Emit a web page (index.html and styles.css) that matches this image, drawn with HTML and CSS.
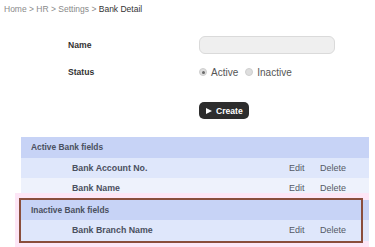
FILE: index.html
```html
<!DOCTYPE html>
<html>
<head>
<meta charset="utf-8">
<link rel="stylesheet" href="styles.css">
</head>
<body>
<div class="crumbs">Home &gt; HR &gt; Settings &gt; <span class="cur">Bank Detail</span></div>
<div class="form">
  <div class="lbl name-lbl">Name</div>
  <div class="input"></div>
  <div class="lbl status-lbl">Status</div>
  <div class="radios">
    <span class="radio on"></span><span class="rtxt">Active</span>
    <span class="radio"></span><span class="rtxt">Inactive</span>
  </div>
  <div class="spacer"></div>
  <div class="btn-cell"><button class="create"><span class="tri"></span>Create</button></div>
</div>
<div class="fields">
  <div class="hdr">Active Bank fields</div>
  <div class="frow r1"><span class="fname">Bank Account No.</span><span class="edit">Edit</span><span class="del">Delete</span></div>
  <div class="frow r2"><span class="fname">Bank Name</span><span class="edit">Edit</span><span class="del">Delete</span></div>
</div>
<div class="inactive">
  <div class="hdr">Inactive Bank fields</div>
  <div class="frow r3"><span class="fname">Bank Branch Name</span><span class="edit">Edit</span><span class="del">Delete</span></div>
  <div class="mark"></div>
</div>
</body>
</html>
```

FILE: styles.css
```css
html, body {
  margin: 0;
  padding: 0;
  background: #ffffff;
  font-family: "Liberation Sans", Arial, sans-serif;
  width: 375px;
  height: 247px;
  overflow: hidden;
}
.crumbs {
  padding: 4px 4px;
  font-size: 8.5px;
  line-height: 10px;
  color: #8a8a8a;
}
.crumbs .cur {
  color: #333;
}
.form {
  margin: 18px 0 0 68px;
  display: grid;
  grid-template-columns: 131px auto;
  grid-template-rows: 18px 14px auto;
  row-gap: 11px;
  align-items: center;
}
.form .lbl {
  font-size: 8.6px;
  font-weight: bold;
  color: #333;
}
.input {
  width: 134px;
  height: 16px;
  background: #efefef;
  border: 1px solid #dadada;
  border-radius: 6px;
}
.radios {
  display: flex;
  align-items: center;
  font-size: 10px;
  color: #555;
}
.radio {
  width: 8px;
  height: 8px;
  border-radius: 50%;
  background: #dedede;
  border: 1px solid #cfcfcf;
  margin: 0 4px 0 0;
  box-sizing: border-box;
  display: inline-flex;
  align-items: center;
  justify-content: center;
}
.radio.on::after {
  content: "";
  width: 3px;
  height: 3px;
  border-radius: 50%;
  background: #6a6a6a;
}
.radios .rtxt {
  margin-right: 7px;
}
.btn-cell {
  margin-top: 12px;
}
.create {
  display: flex;
  align-items: center;
  width: 50px;
  height: 17px;
  padding: 0 0 0 7px;
  border: none;
  border-radius: 5px;
  background: #2d2d2d;
  color: #fff;
  font-family: "Liberation Sans", Arial, sans-serif;
  font-size: 8.6px;
  font-weight: bold;
}
.tri {
  width: 0;
  height: 0;
  border-left: 6px solid #fff;
  border-top: 3.5px solid transparent;
  border-bottom: 3.5px solid transparent;
  margin-right: 4px;
}
.fields {
  margin: 18px 6px 0 21px;
}
.hdr {
  height: 21px;
  line-height: 21px;
  padding-left: 10px;
  background: #c7d3f6;
  font-size: 8.4px;
  font-weight: bold;
  color: #4a5060;
}
.frow {
  display: flex;
  height: 20px;
  line-height: 20px;
  font-size: 9px;
  color: #555a66;
}
.frow .fname {
  flex: 1;
  padding-left: 51px;
  font-weight: bold;
  color: #4a5060;
  font-size: 8.8px;
}
.frow .edit {
  width: 31px;
}
.frow .del {
  width: 49px;
}
.r1 {
  background: #dfe7fb;
}
.r2 {
  background: #eef2fc;
  height: 15px;
  line-height: 10px;
  padding-top: 5px;
  box-sizing: border-box;
}
.inactive {
  position: relative;
  margin: 0 6px 0 15px;
  padding: 7px 0 12px 6px;
  background: #fde6f6;
}
.inactive .hdr {
  height: 20px;
  line-height: 20px;
}
.r3 {
  background: #dfe7fb;
  height: 21px;
  line-height: 21px;
}
.mark {
  position: absolute;
  left: 4px;
  top: 5px;
  width: 344px;
  height: 45px;
  box-sizing: border-box;
  border: 2px solid #8a4e3c;
}
```
